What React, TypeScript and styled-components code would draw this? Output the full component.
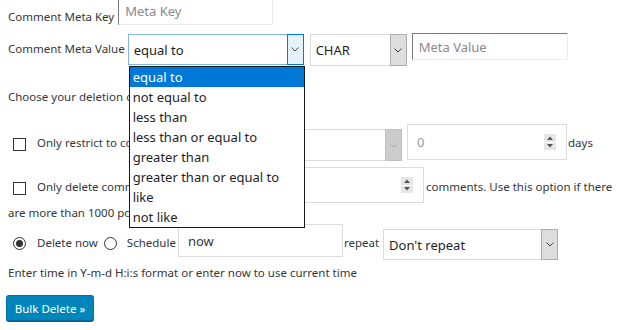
import React from "react";
import styled, { createGlobalStyle } from "styled-components";

const GlobalStyle = createGlobalStyle`
  html, body {
    margin: 0;
    padding: 0;
    background: #fff;
  }
  body {
    font-family: "Noto Sans", "Open Sans", sans-serif;
    font-size: 11.5px;
    color: #32373c;
  }
`;

const Page = styled.div`
  width: 630px;
  height: 330px;
  overflow: hidden;
  box-sizing: border-box;
  padding-left: 8px;
`;

const Form = styled.div`
  margin-top: -3px;
  display: flex;
  flex-direction: column;
  align-items: flex-start;
`;

const Row = styled.div<{ $top?: number; $align?: string }>`
  display: flex;
  align-items: ${(p) => p.$align || "flex-start"};
  margin-top: ${(p) => p.$top || 0}px;
`;

const Label = styled.span<{ $top?: number; $left?: number; $width?: number }>`
  display: block;
  line-height: 16px;
  white-space: nowrap;
  margin-top: ${(p) => p.$top || 0}px;
  margin-left: ${(p) => p.$left || 0}px;
  ${(p) => (p.$width ? `width: ${p.$width}px;` : "")}
`;

const Line = styled.div<{ $top?: number }>`
  line-height: 16px;
  white-space: nowrap;
  margin-top: ${(p) => p.$top || 0}px;
`;

const TextInput = styled.input<{
  $w: number;
  $h: number;
  $left?: number;
  $top?: number;
  $inset?: boolean;
  $pad?: number;
}>`
  box-sizing: border-box;
  width: ${(p) => p.$w}px;
  height: ${(p) => p.$h}px;
  margin: ${(p) => p.$top || 0}px 0 0 ${(p) => p.$left || 0}px;
  padding: 0 6px 0 ${(p) => p.$pad || 6}px;
  font-family: "Noto Sans", sans-serif;
  font-size: 13px;
  color: #32373c;
  background: #fff;
  outline: none;
  border: 1px solid #dcdcdc;
  ${(p) =>
    p.$inset
      ? `border-color: #7a7a7a #ececec #ececec #7a7a7a;`
      : ""}
  &::placeholder {
    color: #8a8a8a;
  }
`;

const NumberBox = styled.div<{ $w: number; $h: number; $left?: number }>`
  box-sizing: border-box;
  width: ${(p) => p.$w}px;
  height: ${(p) => p.$h}px;
  margin-left: ${(p) => p.$left || 0}px;
  border: 1px solid #dcdcdc;
  background: #fff;
  display: flex;
  align-items: center;
  padding: 0 10px 0 9px;
  font-size: 13px;
  color: #9a9a9a;
`;

const NumberValue = styled.span`
  flex: 1;
`;

const Spin = styled.div`
  width: 12px;
  height: 16px;
  display: flex;
  flex-direction: column;
  gap: 1px;
  & > span {
    flex: 1;
    background: #e6e6e6;
    display: flex;
    align-items: center;
    justify-content: center;
  }
`;

const SelectBox = styled.div<{
  $w: number;
  $h: number;
  $left?: number;
  $top?: number;
  $focus?: boolean;
}>`
  position: relative;
  box-sizing: border-box;
  width: ${(p) => p.$w}px;
  height: ${(p) => p.$h}px;
  margin: ${(p) => p.$top || 0}px 0 0 ${(p) => p.$left || 0}px;
  border: 1px solid ${(p) => (p.$focus ? "#7fb5ea" : "#dcdcdc")};
  background: #fff;
  display: flex;
  align-items: stretch;
  font-size: 13px;
  color: #1e1e1e;
`;

const SelectText = styled.span`
  flex: 1;
  display: flex;
  align-items: center;
  padding-left: 5px;
  white-space: nowrap;
`;

const ArrowBox = styled.span<{ $tone: "focus" | "normal" | "disabled" }>`
  box-sizing: border-box;
  width: 17px;
  margin: -1px -1px -1px 0;
  display: flex;
  align-items: center;
  justify-content: center;
  border: 1px solid
    ${(p) =>
      p.$tone === "focus" ? "#0078d7" : p.$tone === "disabled" ? "#c0c0c0" : "#adadad"};
  background: ${(p) =>
    p.$tone === "focus" ? "#e5f1fb" : p.$tone === "disabled" ? "#cccccc" : "#dddddd"};
  color: ${(p) => (p.$tone === "disabled" ? "#a8a8a8" : "#444")};
`;

const ListBox = styled.ul`
  position: absolute;
  z-index: 10;
  top: 31px;
  left: 0;
  width: 176px;
  box-sizing: border-box;
  margin: 0;
  padding: 0;
  list-style: none;
  background: #fff;
  border: 1px solid #1a1a1a;
`;

const Option = styled.li<{ $active?: boolean }>`
  height: 20px;
  line-height: 20px;
  padding-left: 3px;
  font-size: 13px;
  white-space: nowrap;
  color: ${(p) => (p.$active ? "#fff" : "#1e1e1e")};
  background: ${(p) => (p.$active ? "#0078d7" : "transparent")};
`;

const Check = styled.span<{ $top?: number; $left?: number }>`
  box-sizing: border-box;
  width: 13px;
  height: 13px;
  margin: ${(p) => p.$top || 0}px 0 0 ${(p) => p.$left || 0}px;
  border: 1px solid #333;
  background: #fff;
`;

const Radio = styled.span<{ $checked?: boolean; $left?: number; $top?: number }>`
  box-sizing: border-box;
  width: 13px;
  height: 13px;
  margin: ${(p) => p.$top || 0}px 0 0 ${(p) => p.$left || 0}px;
  border: 1px solid #333;
  border-radius: 50%;
  display: flex;
  align-items: center;
  justify-content: center;
  &::after {
    content: "";
    width: 7px;
    height: 7px;
    border-radius: 50%;
    background: ${(p) => (p.$checked ? "#333" : "transparent")};
  }
`;

const Button = styled.button`
  margin: 14px 0 0 -2px;
  box-sizing: border-box;
  width: 88px;
  height: 26px;
  padding: 0;
  border: 1px solid #0073aa;
  border-bottom-color: #006799;
  border-radius: 3px;
  background: #0085ba;
  box-shadow: 0 1px 0 #006799;
  color: #fff;
  font-family: "Noto Sans", sans-serif;
  font-size: 11.5px;
`;

const Chevron = () => (
  <svg width="8" height="5" viewBox="0 0 8 5">
    <path d="M0.5 0.5 L4 4 L7.5 0.5" fill="none" stroke="currentColor" strokeWidth="1" />
  </svg>
);

const Tri = ({ up }: { up?: boolean }) => (
  <svg width="6" height="4" viewBox="0 0 6 4">
    <path d={up ? "M0 4 L3 0.5 L6 4 Z" : "M0 0 L3 3.5 L6 0 Z"} fill="#555" />
  </svg>
);

const Spinner = () => (
  <Spin>
    <span>
      <Tri up />
    </span>
    <span>
      <Tri />
    </span>
  </Spin>
);

const options = [
  "equal to",
  "not equal to",
  "less than",
  "less than or equal to",
  "greater than",
  "greater than or equal to",
  "like",
  "not like",
];

export default function App() {
  return (
    <Page>
      <GlobalStyle />
      <Form>
        <Row $align="flex-end">
          <Label>Comment Meta Key</Label>
          <TextInput $inset $w={155} $h={28} $left={4} placeholder="Meta Key" />
        </Row>

        <Row $top={8}>
          <Label $top={8}>Comment Meta Value</Label>
          <SelectBox $focus $w={176} $h={31} $left={3} $top={1}>
            <SelectText>equal to</SelectText>
            <ArrowBox $tone="focus">
              <Chevron />
            </ArrowBox>
            <ListBox>
              {options.map((o, i) => (
                <Option key={o} $active={i === 0}>
                  {o}
                </Option>
              ))}
            </ListBox>
          </SelectBox>
          <SelectBox $w={97} $h={32} $left={6} $top={1}>
            <SelectText>CHAR</SelectText>
            <ArrowBox $tone="normal">
              <Chevron />
            </ArrowBox>
          </SelectBox>
          <TextInput $inset $w={156} $h={27} $left={5} placeholder="Meta Value" />
        </Row>

        <Line $top={23}>Choose your deletion criteria</Line>

        <Row $top={19}>
          <Check $left={5} $top={14} />
          <Label $left={11} $top={11} $width={149}>
            Only restrict to comments
          </Label>
          <SelectBox $w={216} $h={32} $top={5}>
            <SelectText>older than</SelectText>
            <ArrowBox $tone="disabled">
              <Chevron />
            </ArrowBox>
          </SelectBox>
          <NumberBox $w={160} $h={36} $left={5}>
            <NumberValue>0</NumberValue>
            <Spinner />
          </NumberBox>
          <Label $left={1} $top={11}>
            days
          </Label>
        </Row>

        <Row $top={6}>
          <Check $left={5} $top={15} />
          <Label $left={11} $top={12} $width={192}>
            Only delete comments in batches of
          </Label>
          <NumberBox $w={192} $h={36} $left={3}>
            <NumberValue />
            <Spinner />
          </NumberBox>
          <Label $left={2} $top={12}>
            comments. Use this option if there
          </Label>
        </Row>
        <Line $top={2}>are more than 1000 posts and the script timesout.</Line>

        <Row $top={3}>
          <Radio $checked $left={5} $top={13} />
          <Label $left={11} $top={11}>
            Delete now
          </Label>
          <Radio $left={6} $top={13} />
          <Label $left={10} $top={11}>
            Schedule
          </Label>
          <TextInput $w={165} $h={33} $left={2} $pad={9} defaultValue="now" />
          <Label $left={1} $top={11}>
            repeat
          </Label>
          <SelectBox $w={175} $h={31} $left={4} $top={5}>
            <SelectText>Don't repeat</SelectText>
            <ArrowBox $tone="normal">
              <Chevron />
            </ArrowBox>
          </SelectBox>
        </Row>

        <Line $top={5}>Enter time in Y-m-d H:i:s format or enter now to use current time</Line>

        <Button>Bulk Delete »</Button>
      </Form>
    </Page>
  );
}
